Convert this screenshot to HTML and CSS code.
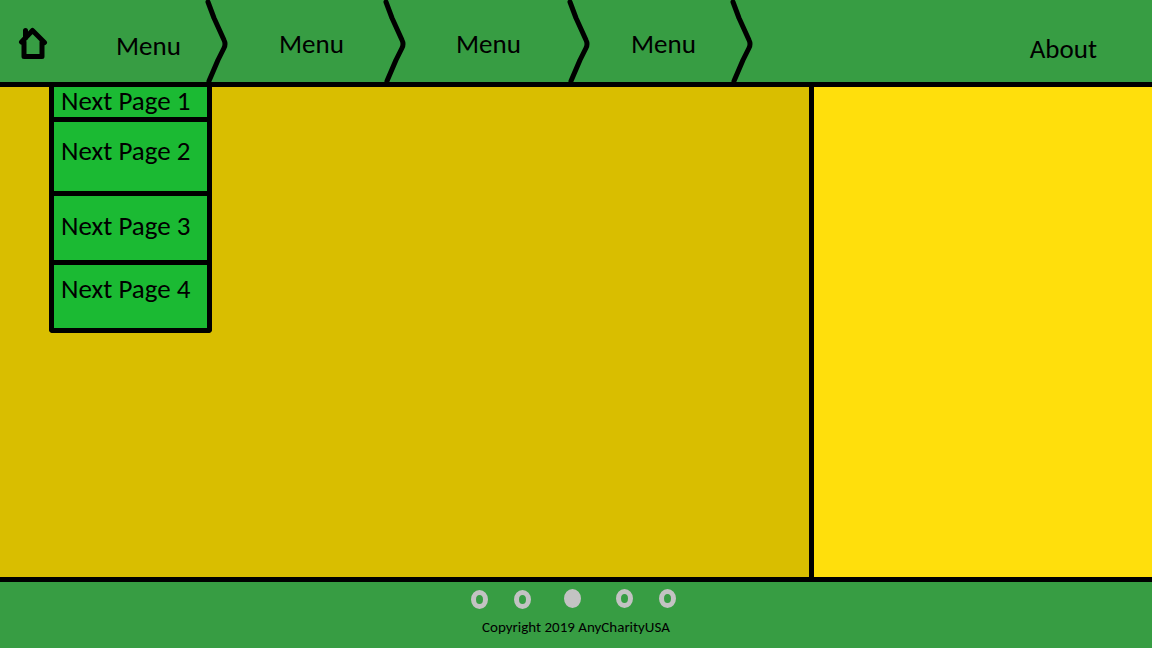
FILE: index.html
```html
<!DOCTYPE html>
<html lang="en">
<head>
<meta charset="utf-8">
<title>AnyCharityUSA</title>
<link rel="stylesheet" href="styles.css">
</head>
<body>
<header class="header">
  <a class="home" href="#" aria-label="Home">
    <svg class="home-icon" viewBox="0 0 30 34"><path d="M3.500 16L14.500 4.500L26.500 16.500M6 16V30.500H24V16M7.500 12V4.500"/></svg>
  </a>
  <nav class="nav">
    <div class="item item-first">
      <a class="link link-low" href="#">Menu</a>
      <svg class="chevron" viewBox="0 0 24 82"><path d="M3 2L9 18L19 40Q21 44 19 48L13 60L4 81"/></svg>
      <ul class="dropdown">
        <li class="option option-1"><a href="#">Next Page 1</a></li>
        <li class="option option-2"><a href="#">Next Page 2</a></li>
        <li class="option option-3"><a href="#">Next Page 3</a></li>
        <li class="option option-4"><a href="#">Next Page 4</a></li>
      </ul>
    </div>
    <div class="item item-second">
      <a class="link" href="#">Menu</a>
      <svg class="chevron" viewBox="0 0 24 82"><path d="M3 2L9 18L19 40Q21 44 19 48L13 60L4 81"/></svg>
    </div>
    <div class="item item-third">
      <a class="link" href="#">Menu</a>
      <svg class="chevron" viewBox="0 0 24 82"><path d="M3 2L9 18L19 40Q21 44 19 48L13 60L4 81"/></svg>
    </div>
    <div class="item item-fourth">
      <a class="link" href="#">Menu</a>
      <svg class="chevron" viewBox="0 0 24 82"><path d="M3 2L9 18L19 40Q21 44 19 48L13 60L4 81"/></svg>
    </div>
  </nav>
  <a class="about" href="#">About</a>
</header>
<div class="content">
  <main class="main"></main>
  <aside class="side"></aside>
</div>
<footer class="footer">
  <div class="dots">
    <button class="dot dot-low" type="button" aria-label="Slide 1"></button>
    <button class="dot dot-low" type="button" aria-label="Slide 2"></button>
    <button class="dot dot-active" type="button" aria-label="Slide 3"></button>
    <button class="dot" type="button" aria-label="Slide 4"></button>
    <button class="dot" type="button" aria-label="Slide 5"></button>
  </div>
  <p class="copyright">Copyright 2019 AnyCharityUSA</p>
</footer>
</body>
</html>
```
FILE: styles.css
```css
* { box-sizing: border-box; }
body {
  margin: 0;
  min-height: 100vh;
  display: flex;
  flex-direction: column;
  background: #379d43;
  color: #000;
  font-family: Carlito, "Noto Sans", sans-serif;
  font-size: 27px;
  line-height: 32px;
}
a { color: inherit; text-decoration: none; }
.header {
  display: flex;
  align-items: flex-start;
  border-bottom: 5px solid #000;
}
.home { padding: 26px 0 0 18px; width: 66px; flex: none; }
.home-icon { display: block; width: 30px; height: 34px; }
.home-icon path, .chevron path {
  fill: none;
  stroke: #000;
  stroke-width: 5;
  stroke-linejoin: round;
  stroke-linecap: round;
}
.nav { display: flex; }
.item {
  position: relative;
  display: flex;
  justify-content: space-between;
}
.item-first { width: 163px; padding-left: 50px; }
.item-second { width: 178px; padding-left: 50px; }
.item-third { width: 184px; padding-left: 49px; }
.item-fourth { width: 163px; padding-left: 40px; }
.link { padding-top: 28px; }
.link-low { padding-top: 30px; }
.chevron { display: block; width: 24px; height: 82px; }
.about { margin-left: auto; padding: 33px 55px 0 0; }
.dropdown {
  position: absolute;
  top: 87px;
  left: -17px;
  width: 163px;
  margin: 0;
  padding: 0;
  list-style: none;
  background: #1bba33;
  border: 5px solid #000;
  border-top: 0;
  border-radius: 0 0 4px 4px;
}
.option { padding-left: 7px; white-space: nowrap; }
.option + .option { border-top: 5px solid #000; }
.option a { display: block; }
.option-1 { height: 30px; line-height: 28px; }
.option-2 { padding-top: 13px; padding-bottom: 24px; }
.option-3 { padding-top: 14px; padding-bottom: 18px; }
.option-4 { padding-top: 8px; padding-bottom: 23px; }
.content {
  flex: 1;
  display: grid;
  grid-template-columns: 809fr 343fr;
}
.main { background: #d9be00; }
.side { background: #ffdf0c; border-left: 5px solid #000; }
.footer { border-top: 5px solid #000; padding: 7px 0 11px; }
.dots {
  display: flex;
  justify-content: center;
  align-items: flex-start;
  gap: 26px;
  padding-right: 5px;
}
.dot {
  width: 17px;
  height: 19px;
  padding: 0;
  border: 5px solid #c3c3c3;
  border-radius: 50%;
  background: transparent;
}
.dot-low { margin-top: 1px; }
.dot-active { background: #c3c3c3; margin: 0 9px 0 7px; }
.copyright {
  margin: 0;
  padding-top: 8px;
  text-align: center;
  font-size: 15px;
  line-height: 20px;
}
```
